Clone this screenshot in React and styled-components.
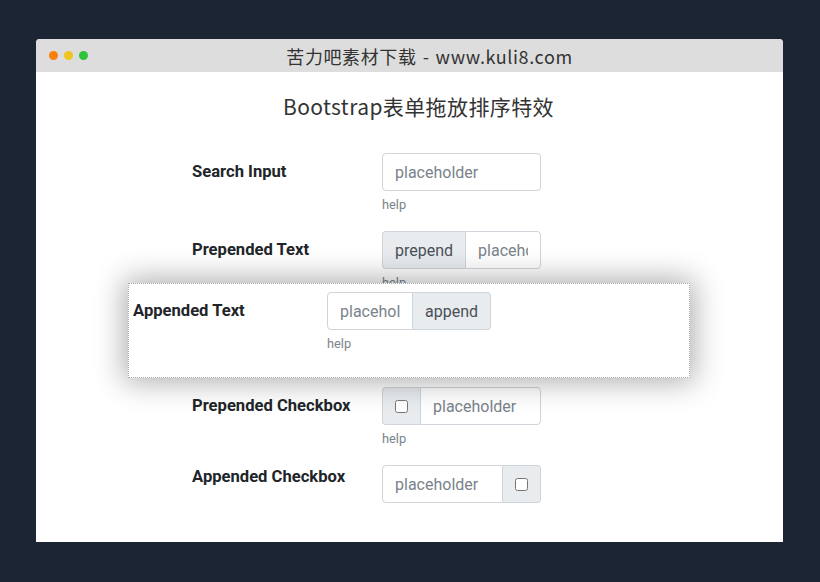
import React from "react";
import styled, { createGlobalStyle } from "styled-components";

const Global = createGlobalStyle`
  html, body { margin: 0; padding: 0; }
  body {
    background: #1b2533;
    font-family: Roboto, "Noto Sans", sans-serif;
    width: 820px;
    height: 582px;
    overflow: hidden;
  }
  * { box-sizing: border-box; }
`;

const Page = styled.div`
  padding: 39px 0 0 36px;
`;

const Window = styled.div`
  width: 747px;
  height: 503px;
  background: #fff;
  border-radius: 4px 4px 0 0;
  overflow: hidden;
  display: flex;
  flex-direction: column;
`;

const TitleBar = styled.div`
  height: 33px;
  flex: none;
  background: #dddddd;
  display: flex;
  align-items: center;
  padding-left: 13px;
`;

const Dots = styled.div`
  display: flex;
  gap: 6px;
`;

const Dot = styled.span`
  width: 9px;
  height: 9px;
  border-radius: 50%;
  background: ${(p) => p.$c};
`;

const TitleText = styled.div`
  flex: 1;
  text-align: center;
  padding-right: 12px;
  font-family: "Noto Sans CJK SC", sans-serif;
  font-size: 18px;
  color: #333;
  letter-spacing: 0.6px;
  word-spacing: 1.5px;
`;

const Content = styled.div`
  position: relative;
  flex: 1;
  padding-top: 21px;
`;

const Heading = styled.h1`
  margin: 0 0 33px;
  padding-left: 18px;
  text-align: center;
  font-family: "Noto Sans CJK SC", sans-serif;
  font-weight: 400;
  font-size: 21px;
  line-height: 27px;
  letter-spacing: 0.4px;
  color: #333;
`;

const Form = styled.div`
  padding-left: 156px;
`;

const Row = styled.div`
  display: grid;
  grid-template-columns: ${(p) => p.$labelW || 190}px ${(p) => p.$inputW || 159}px;
  margin-bottom: ${(p) => (p.$mb === undefined ? 16 : p.$mb)}px;
`;

const Label = styled.div`
  padding-top: ${(p) => (p.$flat ? 0 : 7)}px;
  font-size: 16.6px;
  line-height: 24px;
  font-weight: 700;
  color: #212529;
`;

const Field = styled.div`
  display: flex;
  flex-direction: column;
`;

const Group = styled.div`
  display: flex;
  height: 38px;
  width: 100%;
`;

const Input = styled.input`
  flex: 1 1 auto;
  width: 1%;
  min-width: 0;
  height: 38px;
  margin: 0;
  padding: 6px 12px;
  font-family: Roboto, sans-serif;
  font-size: 16px;
  color: #495057;
  background: #fff;
  border: 1px solid #ced4da;
  border-radius: ${(p) => p.$r || "4px"};
  outline: none;
  &::placeholder { color: #7a838b; opacity: 1; }
`;

const Addon = styled.div`
  flex: none;
  display: flex;
  align-items: center;
  padding: 0 12px;
  height: 38px;
  font-size: 16px;
  color: #495057;
  background: #e9ecef;
  border: 1px solid #ced4da;
  border-radius: ${(p) => p.$r || "4px"};
  ${(p) => (p.$side === "left" ? "border-right: none;" : "border-left: none;")}
`;

const Check = styled.input`
  margin: 0;
  width: 13px;
  height: 13px;
`;

const Help = styled.small`
  display: block;
  margin-top: 4px;
  font-size: 12.8px;
  line-height: 20px;
  color: #7a838b;
`;

const Slot = styled.div`
  height: 78px;
`;

const Dragged = styled.div`
  position: absolute;
  left: 92px;
  top: 211px;
  width: 562px;
  height: 95px;
  background: #fff;
  border: 1px dotted #aaa;
  box-shadow: 0 0 28px 4px rgba(0, 0, 0, 0.32);
  padding: 8px 4px;
`;

export default function App() {
  return (
    <>
      <Global />
      <Page>
        <Window>
          <TitleBar>
            <Dots>
              <Dot $c="#f77f0c" />
              <Dot $c="#f0c420" />
              <Dot $c="#2ec33b" />
            </Dots>
            <TitleText>苦力吧素材下载 - www.kuli8.com</TitleText>
          </TitleBar>
          <Content>
            <Heading>Bootstrap表单拖放排序特效</Heading>
            <Form>
              <Row>
                <Label>Search Input</Label>
                <Field>
                  <Group>
                    <Input placeholder="placeholder" />
                  </Group>
                  <Help>help</Help>
                </Field>
              </Row>
              <Row>
                <Label>Prepended Text</Label>
                <Field>
                  <Group>
                    <Addon $side="left" $r="4px 0 0 4px">prepend</Addon>
                    <Input $r="0 4px 4px 0" placeholder="placeholder" />
                  </Group>
                  <Help>help</Help>
                </Field>
              </Row>
              <Slot />
              <Row>
                <Label>Prepended Checkbox</Label>
                <Field>
                  <Group>
                    <Addon $side="left" $r="4px 0 0 4px">
                      <Check type="checkbox" />
                    </Addon>
                    <Input $r="0 4px 4px 0" placeholder="placeholder" />
                  </Group>
                  <Help>help</Help>
                </Field>
              </Row>
              <Row>
                <Label $flat>Appended Checkbox</Label>
                <Field>
                  <Group>
                    <Input $r="4px 0 0 4px" placeholder="placeholder" />
                    <Addon $side="right" $r="0 4px 4px 0">
                      <Check type="checkbox" />
                    </Addon>
                  </Group>
                </Field>
              </Row>
            </Form>
            <Dragged>
              <Row $labelW={194} $inputW={164} $mb={0}>
                <Label>Appended Text</Label>
                <Field>
                  <Group>
                    <Input $r="4px 0 0 4px" placeholder="placeholder" />
                    <Addon $side="right" $r="0 4px 4px 0">append</Addon>
                  </Group>
                  <Help>help</Help>
                </Field>
              </Row>
            </Dragged>
          </Content>
        </Window>
      </Page>
    </>
  );
}
